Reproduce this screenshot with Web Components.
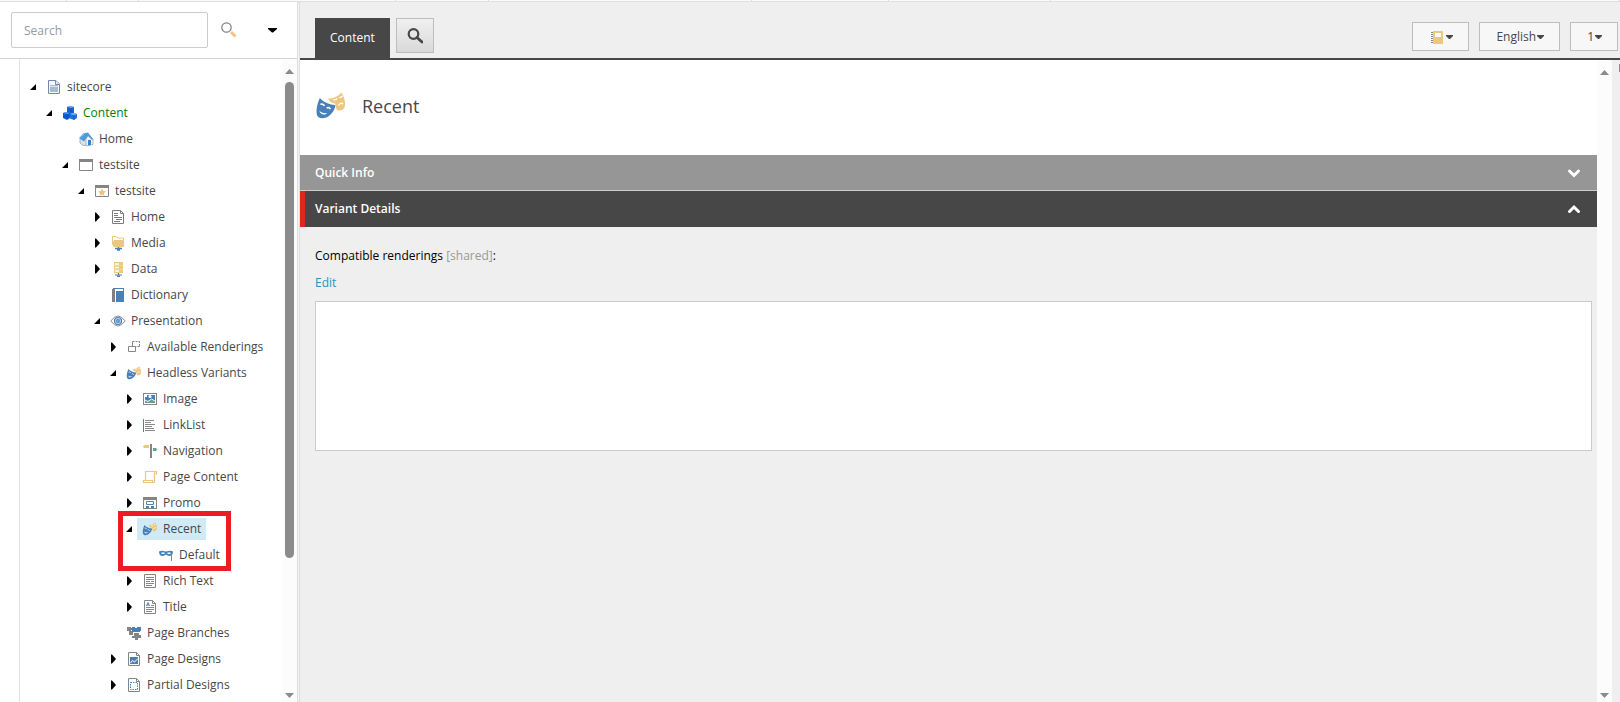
<!DOCTYPE html>
<html lang="en">
<head>
<meta charset="utf-8">
<title>Content Editor</title>
<style>
html, body {
  height: 100%;
  margin: 0;
}

body {
  font: 12px/20px "Open Sans", "Noto Sans", sans-serif;
  color: #474747;
  background: #fff;
  overflow: hidden;
}
</style>
</head>
<body>
<content-editor></content-editor>

<script>
const icons = {
  document: '<path d="M2.500 1.500h7.500l3.500 3.500v9.500h-11z" fill="#f4f7fc" stroke="#7487ad"/><path d="M9.500 1.500v4h4" fill="#dfe7f4" stroke="#7487ad"/><path d="M4 6h8v7H4z" fill="#a9b9d8"/><path d="M4 7.500h8" stroke="#dbe3f1"/>',
  cubes: '<path d="M5 2l3-1 4 1v6l-3 1-4-1z" fill="#1163d6"/><path d="M5 2l3-1 4 1-3 1z" fill="#69aaf7"/><path d="M1 8l3-1 4 1v5l-3 2-4-2z" fill="#0d5bd0"/><path d="M1 8l3-1 4 1-3 1z" fill="#5ba0f5"/><path d="M8 9l3-1 4 1v4l-3 2-4-1.500z" fill="#1d74e4"/><path d="M8 9l3-1 4 1-3 1z" fill="#7db8fa"/><path d="M9 3.500v4M5 9.500V14M12 10.500v4" stroke="#0a3f9c" stroke-width=".6"/>',
  house: '<path d="M2 8l4-4 4 4v6l-5 .5L2 12z" fill="#dde2e8" stroke="#8c99a8" stroke-width=".7"/><path d="M8 7.500l3-3.500 4 4v5.500L8 15z" fill="#f3f6f8" stroke="#93a1af" stroke-width=".7"/><path d="M1 7l4-4.500 5-1L15 8l-1 1-4-4-4 5.500z" fill="#4c9bdc"/><path d="M2 6l4-3" stroke="#a9d6f7"/><path d="M10 9h3v5l-3 .5z" fill="#2f83d0"/>',
  window: '<path d="M1.500 3.500h13v10h-13z" fill="#fff" stroke="#858585"/><path d="M1 2h14v3H1z" fill="#858585"/>',
  windowStar: '<path d="M1.500 3.500h13v10h-13z" fill="#fff" stroke="#858585"/><path d="M1 2h14v3H1z" fill="#858585"/><path d="M8 5.500l1.100 2.600 2.900.3-2.200 1.800.7 2.800L8 11.500 5.500 13l.7-2.800L4 8.400l2.900-.3z" fill="#eec373"/>',
  page: '<path d="M2.500 1.500h8l3 3v10h-11zM10.500 1.500v3h3" fill="#fff" stroke="#7d7d7d"/><path d="M4 4.500h4M4 6.500h4M4 8.500h8M6 10.500h6M4 12.500h6" stroke="#7d7d7d"/>',
  media: '<path d="M2.500 9.500v-8h4L8 3h5.500v8.500h-9z" fill="#fff" stroke="#eec77f"/><path d="M2 9l2-4h10v7H4z" fill="#eec77f"/><path d="M8.500 12v2M5 13.500h7M7 15h3" stroke="#4a80b8" stroke-width="1.300"/>',
  data: '<path d="M4 1h9v11H4z" fill="#eec77f"/><path d="M5 3h4M5 6.500h4M5 10h4" stroke="#fff" stroke-width="1.500"/><path d="M4 4.500h9M4 8.500h9" stroke="#f8dfb1" stroke-width=".6"/><path d="M8.500 12v2M5 14h7M7 15.300h3" stroke="#4a80b8" stroke-width="1.200"/>',
  book: '<path d="M2 2h3v13H2z" fill="#808080"/><path d="M3 1.500h11" stroke="#4a80b8"/><path d="M6 4h8v11H6z" fill="#4a80b8"/><path d="M13.500 1v14" stroke="#4a80b8"/>',
  eye: '<path d="M.8 8q7.200-10 14.400 0-7.200 10-14.400 0z" fill="#fff" stroke="#929292"/><circle cx="8" cy="8" r="3.500" fill="#c3d6ea" stroke="#4a80b8" stroke-width="1.200"/><circle cx="8" cy="8" r="1.900" fill="#4a80b8"/><path d="M7.500 7.500h1v1h-1z" fill="#fff"/>',
  renderings: '<path d="M6.500 7.500v-5h2m1 0h2m1 0h1v1.500m0 1v2.500h-2m-1 0h-1" fill="none" stroke="#858585"/><path d="M2.500 7.500h7v5h-7z" fill="#fff" stroke="#858585"/>',
  masks: '<path d="M6.500 4.200c2.800 0 5-1 6.700-3 1.300 2.200 2.200 4.600 1.700 7-.5 1.700-2.300 2.500-4 1.800L10 6.700c-1.700-.3-2.700-1-3.500-2.500z" fill="#eec77f"/><path d="M2.400 4c2 2.300 4.800 3.200 7.800 3.600-.3 2.500-1.900 4.600-4.200 6-2.300 1.100-4.800.7-5.200-1.700-.3-2.600.5-5.400 1.600-7.900z" fill="#4a80b8"/><path d="M2.700 7.200c.8-.4 1.600 0 2 .8M5.800 9c.8-.5 1.500-.2 1.900.6" fill="none" stroke="#fff" stroke-width=".8"/><path d="M2.200 10.400c.9.900 2.300 1.400 3.900 1.100-1.100 1.300-3.500 1-3.900-1.100z" fill="#fff"/><path d="M9.200 4.700c.8.300 1.400.1 1.900-.5M12.200 3.800c.6 0 1.200-.3 1.400-.9M11.700 7.800c.6-1.200 1.700-1.500 2.300-.7" fill="none" stroke="#fff" stroke-width=".7"/>',
  image: '<path d="M1 2h14v12H1z" fill="#858585"/><path d="M2 3h12v10H2z" fill="#fff"/><path d="M3 4h10v8H3z" fill="#4a80b8"/><path d="M3 12V9.500l3 1.500 4-2.500 3 2v1.500z" fill="#60a389"/><path d="M3 9l3 1.500L9.500 8 13 10" fill="none" stroke="#fff"/><circle cx="8" cy="5.500" r="1.500" fill="#fff"/><path d="M3 4h2v2H3z" fill="#fff"/>',
  list: '<path d="M1.500 2v13" stroke="#4a80b8"/><path d="M3 3.500h9M3 5.500h6M3 7.500h10M3 9.500h7M3 11.500h9M3 13.500h10" stroke="#8a8a8a"/>',
  signpost: '<path d="M8 1h2v14H8z" fill="#858585"/><path d="M1 3.500L2 2h5v3H2z" fill="#eec77f"/><path d="M11 5h3l1 1.500L14 8h-3z" fill="#60a389"/>',
  scroll: '<path d="M3.500 11V2.500h11V5H12m.5-2v10.500h-11v-2h9v2" fill="none" stroke="#eec77f" stroke-width="1.200"/>',
  promo: '<path d="M1 2h14v12H1z" fill="#858585"/><path d="M2 5h12v8H2z" fill="#fff"/><path d="M4.500 6.500h7v3h-7z" fill="none" stroke="#4a80b8"/><path d="M4 11h3v2H4zM9 11h3v2H9z" fill="#4a80b8"/>',
  mask: '<path d="M1 4.500c2-1 4-.8 7 0 3-.8 5-1 7 0 0 3-1.500 4.500-3.500 4.500S9 8 8 7.500C7 8 6 9 4.500 9 2.500 9 1 7.500 1 4.500z" fill="#4a80b8"/><path d="M3.500 6.300h3M9.500 6.300h3" stroke="#fff" stroke-width="1.500"/><path d="M13.500 7v7" stroke="#858585"/>',
  richText: '<path d="M2.500 1.500h11v13h-11z" fill="#fff" stroke="#858585"/><path d="M4 4.500h8M4 6.500h8M4 8.500h4M9 8.500h3M4 10.500h8M4 12.500h6" stroke="#858585"/>',
  title: '<path d="M2.500 1.500h8l3 3v10h-11zM10.500 1.500v3h3" fill="#fff" stroke="#858585"/><path d="M4.500 7L6 3.500 7.500 7M5 6h2" fill="none" stroke="#4a80b8"/><path d="M9 6.500h3M4 8.500h8M4 10.500h8M4 12.500h6" stroke="#858585"/>',
  branches: '<path d="M1 2h4v6H3V6H1zM3 6h4v4H3z" fill="#858585"/><path d="M6 2h3v1h2V2h4v4h-1v1H6V5H5V3h1z" fill="#4a80b8"/><path d="M8 8h5v2h2v3h-3v2H9v-2H6v-2h2z" fill="#858585"/>',
  pageDesign: '<path d="M2.500 1.500h8l3 3v10h-11zM10.500 1.500v3h3" fill="#fff" stroke="#858585"/><path d="M4 6h8v7H4z" fill="#4a80b8"/><path d="M4.500 12l2-2.500 2 1.500L12 7.500" fill="none" stroke="#fff"/>',
  partialDesign: '<path d="M2.500 1.500h8l3 3v10h-11zM10.500 1.500v3h3" fill="#fff" stroke="#858585"/><path d="M4.500 5.500h7v7h-7z" fill="none" stroke="#4a80b8" stroke-dasharray="1.500 1"/>',
  search: '<circle cx="5.500" cy="5.500" r="4.700" fill="none" stroke="#808080" stroke-width="1.200"/><path d="M10 10l4.500 4.500" stroke="#eec77f" stroke-width="3"/>',
  find: '<circle cx="6.500" cy="6" r="4.800" fill="none" stroke="#474747" stroke-width="2.200"/><path d="M10 9.500l5 4.500" stroke="#474747" stroke-width="2.800" stroke-linecap="round"/>',
  notebook: '<path d="M4 2h10v13H4z" fill="#eec77f"/><path d="M6 4h6v4H6z" fill="#fff"/><path d="M2 3.500h2M2 5.500h2M2 7.500h2M2 9.500h2M2 11.500h2M2 13.500h2" stroke="#858585"/>',
  caret: '<path d="M3 6h9v1l-4 3.500H7L3 7z" fill="currentColor"/>',
  expanded: '<path d="M6 5v6H0z" fill="#000"/>',
  collapsed: '<path d="M1 3.500v9h1l4-4.500-4-4.500z" fill="#000"/>',
  down: '<path d="M3.500 6L8 10.500 12.500 6" fill="none" stroke="#fff" stroke-width="3" stroke-linecap="round"/>',
  up: '<path d="M3.500 10.500L8 6l4.500 4.500" fill="none" stroke="#fff" stroke-width="3" stroke-linecap="round"/>'
}

function define (name, html, setup) {
  const template = document.createElement('template')
  template.innerHTML = html
  customElements.define(name, class extends HTMLElement {
    connectedCallback () {
      if (this.shadowRoot) return
      this.attachShadow({ mode: 'open' })
      this.shadowRoot.appendChild(template.content.cloneNode(true))
      if (setup) setup(this, this.shadowRoot)
    }
  })
}

function makeIcon (name) {
  const icon = document.createElement('ui-icon')
  icon.setAttribute('name', name)
  return icon
}

const buttonReset = `
button {
  font: inherit;
  color: inherit;
  margin: 0;
  padding: 0;
  border: 0;
  background: none;
  cursor: pointer;
}
`

define('ui-icon', `
<style>
:host {
  display: block;
  flex: none;
  width: var(--icon-size, 16px);
  height: var(--icon-size, 16px);
}
svg {
  display: block;
  width: 100%;
  height: 100%;
}
</style>
<svg viewBox="0 0 16 16" aria-hidden="true"></svg>
`, (host, root) => {
  root.querySelector('svg').innerHTML = icons[host.getAttribute('name')]
})

define('scroll-track', `
<style>
:host {
  display: flex;
  flex-direction: column;
  align-items: center;
  flex: none;
  width: 15px;
  background: #fcfcfc;
}
svg {
  flex: none;
  width: 9px;
  height: 5px;
  margin: 10px 0 8px;
  fill: #8b8b8b;
}
svg:last-child {
  margin: 8px 0 4px;
}
.rail {
  flex: 1;
  width: 9px;
}
.thumb {
  height: var(--thumb, 0%);
  border-radius: 5px;
  background: #8b8b8b;
}
</style>
<svg viewBox="0 0 9 5"><path d="M0 5L4.500 0 9 5z"/></svg>
<div class="rail"><div class="thumb"></div></div>
<svg viewBox="0 0 9 5"><path d="M0 0l4.500 5L9 0z"/></svg>
`)

define('tree-item', `
<style>
${buttonReset}
:host {
  display: block;
  position: relative;
  width: max-content;
}
.row {
  display: flex;
  align-items: center;
  height: 26px;
}
.toggle {
  width: 16px;
  height: 16px;
}
a {
  display: flex;
  align-items: center;
  gap: 5px;
  height: 22px;
  margin: 0 -5px;
  padding: 0 5px;
  color: inherit;
  text-decoration: none;
  white-space: nowrap;
}
.children {
  padding-left: 16px;
}
:host([published]) a {
  color: #008000;
}
:host([selected]) a {
  background: #d0ebf6;
}
:host([marked])::after {
  content: "";
  position: absolute;
  inset: -5px -11px -3px -8px;
  border: 5px solid #ed1c24;
  pointer-events: none;
}
</style>
<div class="row">
  <div class="toggle"></div>
  <a href="#"><ui-icon></ui-icon><span></span></a>
</div>
<div class="children"><slot></slot></div>
`, (host, root) => {
  const state = host.getAttribute('state')
  root.querySelector('a ui-icon').replaceWith(makeIcon(host.getAttribute('icon')))
  root.querySelector('span').textContent = host.getAttribute('label')
  if (state) {
    const button = document.createElement('button')
    button.className = 'toggle'
    button.setAttribute('aria-label', 'Toggle ' + host.getAttribute('label'))
    button.setAttribute('aria-expanded', state === 'expanded')
    button.appendChild(makeIcon(state))
    root.querySelector('.toggle').replaceWith(button)
  }
})

define('search-bar', `
<style>
${buttonReset}
:host {
  display: flex;
  align-items: center;
  flex: none;
  height: 56px;
  padding: 0 16px 0 11px;
  border-bottom: 1px solid #d4d4d4;
}
input {
  flex: 1;
  min-width: 0;
  box-sizing: border-box;
  height: 36px;
  margin: 0 13px 0 0;
  padding: 0 12px;
  border: 1px solid #ccc;
  border-radius: 2px;
  outline: 0;
  font: inherit;
  color: inherit;
}
input::placeholder {
  color: #999;
  opacity: 1;
}
.more {
  margin-left: 28px;
  color: #000;
}
</style>
<input type="search" placeholder="Search" aria-label="Search">
<button aria-label="Run search"><ui-icon name="search"></ui-icon></button>
<button class="more" aria-label="Search options"><ui-icon name="caret"></ui-icon></button>
`)

define('content-tree', `
<style>
:host {
  display: flex;
  flex: 1;
  min-height: 0;
  padding-left: 19px;
}
nav {
  flex: 1;
  padding: 15px 0 0 10px;
  border-left: 1px solid #e3e3e3;
  overflow: hidden;
}
</style>
<nav aria-label="Content tree"><slot></slot></nav>
<scroll-track style="--thumb: 79%"></scroll-track>
`)

define('menu-button', `
<style>
${buttonReset}
:host {
  display: block;
}
button {
  display: flex;
  align-items: center;
  height: 29px;
  padding: 0 15px 0 16px;
  border: 1px solid #bdbdbd;
  background: #f7f7f7;
}
svg {
  width: 7px;
  height: 4px;
  margin-left: 1px;
  fill: #474747;
}
</style>
<button aria-haspopup="true"><slot></slot><svg viewBox="0 0 7 4"><path d="M0 0h7v1L4 4H3L0 1z"/></svg></button>
`, (host, root) => {
  root.querySelector('button').setAttribute('aria-label', host.getAttribute('label'))
})

define('tab-bar', `
<style>
${buttonReset}
:host {
  display: flex;
  flex: none;
  justify-content: space-between;
  align-items: flex-end;
  height: 56px;
  padding: 0 2px 0 15px;
  border-bottom: 2px solid #474747;
}
.tabs, .menus {
  display: flex;
}
.tabs {
  gap: 6px;
}
.tab {
  height: 40px;
  padding: 0 15px;
  color: #fff;
  background: #474747;
}
.find {
  display: flex;
  align-items: center;
  justify-content: center;
  width: 38px;
  height: 35px;
  border: 1px solid #bdbdbd;
  background: linear-gradient(#f0f0f0, #d9d9d9);
}
.menus {
  gap: 10px;
  padding-bottom: 7px;
}
</style>
<div class="tabs">
  <button class="tab">Content</button>
  <button class="find" aria-label="Search tab"><ui-icon name="find"></ui-icon></button>
</div>
<div class="menus"><slot></slot></div>
`)

define('editor-section', `
<style>
${buttonReset}
:host {
  display: block;
}
h2 {
  margin: 0;
  font-size: 12px;
}
button {
  display: flex;
  align-items: center;
  justify-content: space-between;
  box-sizing: border-box;
  width: 100%;
  height: 36px;
  padding: 0 15px;
  border-bottom: 1px solid #ccc;
  color: #fff;
  font-weight: 600;
  background: #969696;
}
:host([open]) button {
  padding-left: 10px;
  border-left: 5px solid #dc291e;
  border-bottom: 0;
  background: #474747;
}
.body {
  padding: 0 5px 0 15px;
}
</style>
<h2><button><span></span></button></h2>
<div class="body"><slot></slot></div>
`, (host, root) => {
  const open = host.hasAttribute('open')
  const button = root.querySelector('button')
  button.setAttribute('aria-expanded', open)
  root.querySelector('span').textContent = host.getAttribute('heading')
  button.appendChild(makeIcon(open ? 'up' : 'down'))
})

define('list-field', `
<style>
:host {
  display: flex;
  flex-direction: column;
  align-items: flex-start;
  padding-top: 19px;
}
label {
  color: #000;
}
label span {
  color: #999;
}
a {
  margin: 7px 0 8px;
  color: #2694c0;
  text-decoration: none;
}
textarea {
  box-sizing: border-box;
  width: 100%;
  height: 150px;
  margin: 0;
  border: 1px solid #ccc;
  outline: 0;
  resize: none;
  font: inherit;
  background: #fff;
}
</style>
<label for="value"><slot></slot> <span>[shared]</span>:</label>
<a href="#">Edit</a>
<textarea id="value"></textarea>
`)

define('item-header', `
<style>
:host {
  display: flex;
  align-items: center;
  gap: 15px;
  box-sizing: border-box;
  height: 95px;
  padding: 0 15px 3px;
  background: #fff;
  --icon-size: 32px;
}
h1 {
  margin: 0;
  font-size: 18px;
  line-height: 24px;
  font-weight: 400;
}
</style>
<ui-icon name="masks"></ui-icon>
<h1><slot></slot></h1>
`)

define('content-editor', `
<style>
:host {
  display: flex;
  flex-direction: column;
  height: 100vh;
}
.ribbon {
  display: flex;
  flex: none;
  height: 1px;
  border-bottom: 1px solid #e0e0e0;
  background: #fafafa;
}
.ribbon i {
  box-sizing: border-box;
  border-right: 1px solid #ddd;
}
.panes {
  display: flex;
  flex: 1;
  min-height: 0;
}
aside {
  display: flex;
  flex-direction: column;
  flex: none;
  width: 297px;
}
.splitter {
  flex: none;
  width: 1px;
  border: 1px solid #dedede;
  background: #f4f4f4;
}
main {
  display: flex;
  flex-direction: column;
  flex: 1;
  min-width: 0;
  background: #efefef;
}
.scroller {
  display: flex;
  flex: 1;
  min-height: 0;
}
.fields {
  flex: 1;
  min-width: 0;
}
.edge {
  flex: none;
  width: 8px;
}
.edge::before {
  content: "";
  display: block;
  width: 1px;
  height: 8px;
  margin: 4px 0 0 auto;
  background: #60a389;
}
</style>
<div class="ribbon">
  <i style="flex: 66"></i><i style="flex: 72"></i><i style="flex: 257"></i><i style="flex: 92"></i><i style="flex: 264"></i><i style="flex: 136"></i><i style="flex: 162"></i><i style="flex: 571"></i>
</div>
<div class="panes">
  <aside>
    <search-bar></search-bar>
    <content-tree>
      <tree-item icon="document" label="sitecore" state="expanded">
        <tree-item icon="cubes" label="Content" state="expanded" published>
          <tree-item icon="house" label="Home"></tree-item>
          <tree-item icon="window" label="testsite" state="expanded">
            <tree-item icon="windowStar" label="testsite" state="expanded">
              <tree-item icon="page" label="Home" state="collapsed"></tree-item>
              <tree-item icon="media" label="Media" state="collapsed"></tree-item>
              <tree-item icon="data" label="Data" state="collapsed"></tree-item>
              <tree-item icon="book" label="Dictionary"></tree-item>
              <tree-item icon="eye" label="Presentation" state="expanded">
                <tree-item icon="renderings" label="Available Renderings" state="collapsed"></tree-item>
                <tree-item icon="masks" label="Headless Variants" state="expanded">
                  <tree-item icon="image" label="Image" state="collapsed"></tree-item>
                  <tree-item icon="list" label="LinkList" state="collapsed"></tree-item>
                  <tree-item icon="signpost" label="Navigation" state="collapsed"></tree-item>
                  <tree-item icon="scroll" label="Page Content" state="collapsed"></tree-item>
                  <tree-item icon="promo" label="Promo" state="collapsed"></tree-item>
                  <tree-item icon="masks" label="Recent" state="expanded" selected marked>
                    <tree-item icon="mask" label="Default"></tree-item>
                  </tree-item>
                  <tree-item icon="richText" label="Rich Text" state="collapsed"></tree-item>
                  <tree-item icon="title" label="Title" state="collapsed"></tree-item>
                </tree-item>
                <tree-item icon="branches" label="Page Branches"></tree-item>
                <tree-item icon="pageDesign" label="Page Designs" state="collapsed"></tree-item>
                <tree-item icon="partialDesign" label="Partial Designs" state="collapsed"></tree-item>
              </tree-item>
            </tree-item>
          </tree-item>
        </tree-item>
      </tree-item>
    </content-tree>
  </aside>
  <div class="splitter"></div>
  <main>
    <tab-bar>
      <menu-button label="Item menu"><ui-icon name="notebook"></ui-icon></menu-button>
      <menu-button label="English">English</menu-button>
      <menu-button label="Version 1">1</menu-button>
    </tab-bar>
    <div class="scroller">
      <div class="fields">
        <item-header>Recent</item-header>
        <editor-section heading="Quick Info"></editor-section>
        <editor-section heading="Variant Details" open>
          <list-field>Compatible renderings</list-field>
        </editor-section>
      </div>
      <scroll-track></scroll-track>
      <div class="edge"></div>
    </div>
  </main>
</div>
`)
</script>
</body>
</html>
